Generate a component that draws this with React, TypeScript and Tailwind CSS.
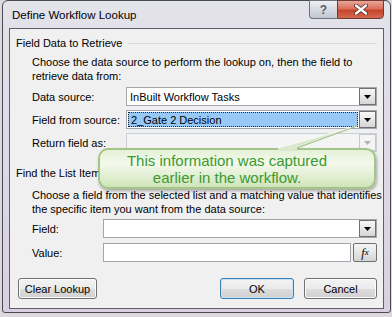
const ui = "font-['Liberation_Sans',Arial,sans-serif] text-[11px] leading-[14px] text-black";

const Arrow = ({ disabled = false }: { disabled?: boolean }) => (
  <div
    className={`w-[17px] h-full shrink-0 flex items-center justify-center border ${
      disabled
        ? "border-[#c4c8ce] bg-[#f4f4f4]"
        : "border-[#707070] bg-[linear-gradient(#f7f7f7,#e8e8e8_50%,#d6d6d6)]"
    }`}
  >
    <svg width="7" height="4" viewBox="0 0 7 4">
      <polygon points="0,0 7,0 3.5,4" fill={disabled ? "#b4b4b4" : "#000"} />
    </svg>
  </div>
);

type ComboProps = {
  value?: string;
  selected?: boolean;
  disabled?: boolean;
};

const Combo = ({ value = "", selected = false, disabled = false }: ComboProps) => (
  <div
    className={`flex-1 h-[19px] flex border ${
      disabled ? "border-[#c9d0d8] bg-[#f4f4f4]" : "border-[#a2a6ad] bg-white"
    }`}
  >
    {selected ? (
      <div className="flex-1 m-px flex items-center pl-[2px] bg-[#97c8f6] border border-dotted border-[#2a2a2a]">
        {value}
      </div>
    ) : (
      <div className="flex-1 flex items-center pl-[3px]">{value}</div>
    )}
    <Arrow disabled={disabled} />
  </div>
);

const Row = ({ label, w, children }: { label: string; w: string; children: React.ReactNode }) => (
  <div className="flex items-center h-[19px] pl-[16px]">
    <span className={`${w} shrink-0`}>{label}</span>
    {children}
  </div>
);

const Header = ({ text }: { text: string }) => (
  <div className="flex items-center gap-[6px] h-[14px]">
    <span>{text}</span>
    <div className="flex-1 border-t border-[#d5dde3] mt-px" />
  </div>
);

const Btn = ({ text, w, focus = false }: { text: string; w: string; focus?: boolean }) => (
  <button
    className={`${w} h-[21px] rounded-[3px] border ${
      focus
        ? "border-[#3c7fb1] shadow-[inset_0_0_0_1px_#c6e4f7]"
        : "border-[#707070] shadow-[inset_0_0_0_1px_#fbfbfb]"
    } bg-[linear-gradient(#f3f3f3,#ebebeb_50%,#dddddd_50%,#d0d0d0)] flex items-center justify-center`}
  >
    {text}
  </button>
);

export default function App() {
  return (
    <div className={`w-[392px] h-[317px] overflow-hidden bg-[#dcd8de] ${ui}`}>
      <div className="ml-[2px] w-[389px] h-[313px] flex flex-col px-[6px] pb-[3px] border border-[#4a4a52] rounded-t-[6px] rounded-b-[3px] bg-[linear-gradient(180deg,#e3e3ea,#dedbe6_40%,#d8d0e0)]">
        {/* title bar */}
        <div className="h-[27px] flex items-start">
          <span className="pl-[3px] pt-[7px] text-[11.5px] leading-[14px]">Define Workflow Lookup</span>
          <div className="ml-auto flex -mt-px">
            <div className="w-[28px] h-[19px] rounded-bl-[4px] border border-[#6d7380] border-r-0 bg-[linear-gradient(#eef0f4,#d6dae1_50%,#c3c8d1)] flex items-center justify-center text-[12px] font-bold text-[#5a5f6a]">
              ?
            </div>
            <div className="w-[47px] h-[19px] rounded-br-[4px] border border-[#6e3a33] bg-[linear-gradient(#e9a596,#d9705c_45%,#c6432c_55%,#d56a4f)] flex items-center justify-center">
              <svg width="14" height="11" viewBox="0 0 14 11">
                <path d="M2 1.5 L12 9.5 M12 1.5 L2 9.5" stroke="#5a2a22" strokeWidth="4" strokeLinecap="round" />
                <path d="M2 1.5 L12 9.5 M12 1.5 L2 9.5" stroke="#fff" strokeWidth="2.4" strokeLinecap="round" />
              </svg>
            </div>
          </div>
        </div>

        {/* client area */}
        <div className="relative flex-1 border border-[#5e5e68] bg-[#f0f0f0] flex flex-col pl-[6px] pr-[6px]">
          <div className="mt-[7px]">
            <Header text="Field Data to Retrieve" />
          </div>
          <p className="mt-[5px] pl-[16px]">
            Choose the data source to perform the lookup on, then the field to
            <br />
            retrieve data from:
          </p>
          <div className="mt-[4px]">
            <Row label="Data source:" w="w-[94px]">
              <Combo value="InBuilt Workflow Tasks" />
            </Row>
          </div>
          <div className="mt-[4px]">
            <Row label="Field from source:" w="w-[94px]">
              <Combo value="2_Gate 2 Decision" selected />
            </Row>
          </div>
          <div className="mt-[4px]">
            <Row label="Return field as:" w="w-[94px]">
              <Combo disabled />
            </Row>
          </div>

          <div className="mt-[14px]">
            <Header text="Find the List Item" />
          </div>
          <p className="mt-[8px] pl-[16px] whitespace-nowrap">
            Choose a field from the selected list and a matching value that identifies
            <br />
            the specific item you want from the data source:
          </p>
          <div className="mt-[3px]">
            <Row label="Field:" w="w-[71px]">
              <Combo />
            </Row>
          </div>
          <div className="mt-[5px]">
            <Row label="Value:" w="w-[71px]">
              <div className="flex-1 h-[19px] border border-[#a2a6ad] bg-white" />
              <button className="ml-[2px] w-[24px] h-[19px] rounded-[2px] border border-[#707070] bg-[linear-gradient(#f5f5f5,#e6e6e6_50%,#d4d4d4)] flex items-center justify-center font-['Liberation_Serif',serif] italic text-[12px] leading-none">
                f<span className="text-[9px]">x</span>
              </button>
            </Row>
          </div>

          <div className="mt-[16px] flex items-center pl-[2px]">
            <Btn text="Clear Lookup" w="w-[79px]" />
            <div className="ml-auto flex gap-[10px]">
              <Btn text="OK" w="w-[74px]" focus />
              <Btn text="Cancel" w="w-[73px]" />
            </div>
          </div>

          {/* callout */}
          <div className="absolute left-[88px] top-[119px] w-[278px] h-[41px] rounded-[10px] border-2 border-[#a4c488] bg-[linear-gradient(180deg,#e4f1d6,#f3f9ec_35%,#e2efd3_70%,#cfe4ba)] shadow-[1px_2px_3px_rgba(0,0,0,0.3)] flex flex-col items-center justify-center pr-[20px] font-['Liberation_Sans',Arial,sans-serif] text-[15px] leading-[17px] text-[#3b9a30]">
            <span>This information was captured</span>
            <span>earlier in the workflow.</span>
          </div>
          <svg className="absolute left-[260px] top-[94px]" width="95" height="28" viewBox="0 0 95 28">
            <polygon points="87,3 8,25 8,28 27,28 27,25" fill="#dbe8cf" />
            <polyline points="8,25 87,3" stroke="#f6faf2" strokeWidth="1.2" fill="none" />
            <polyline points="87,3 27,25" stroke="#9fbd84" strokeWidth="1" fill="none" />
          </svg>
        </div>
      </div>
    </div>
  );
}
